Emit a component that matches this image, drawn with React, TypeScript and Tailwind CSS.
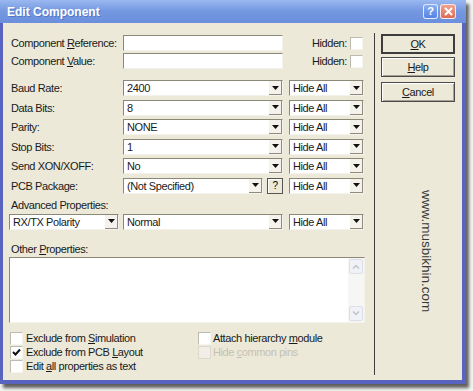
import type { ReactNode } from 'react';

const Arrow = () => (
  <svg width="7" height="4" viewBox="0 0 7 4">
    <path d="M0 0h7L3.5 4z" fill="#111" />
  </svg>
);

const DropBtn = () => (
  <div className="flex h-full w-[13px] shrink-0 items-center justify-center border-r border-b border-r-[#8f8c7e] border-b-[#8f8c7e] bg-[#f4f2ea]">
    <Arrow />
  </div>
);

const Combo = ({ w, value }: { w: string; value: string }) => (
  <div className={`flex h-[16px] shrink-0 ${w} border border-t-[#8b8878] border-l-[#8b8878] border-b-[#f3f2ec] border-r-[#f3f2ec] bg-white`}>
    <span className="flex-1 truncate pl-[3px] text-[11px] leading-[14px] text-[#1a1a1a]">{value}</span>
    <DropBtn />
  </div>
);

const TextBox = ({ w }: { w: string }) => (
  <div className={`h-[16px] shrink-0 ${w} border border-t-[#8b8878] border-l-[#8b8878] border-b-[#f3f2ec] border-r-[#f3f2ec] bg-white`} />
);

const Check = ({ checked = false, disabled = false }: { checked?: boolean; disabled?: boolean }) => (
  <div
    className={`flex h-[13px] w-[13px] shrink-0 items-center justify-center border ${
      disabled ? 'border-[#dcd9cc] bg-[#f0eee6]' : 'border-t-[#bdbab0] border-l-[#bdbab0] border-b-[#f6f5f0] border-r-[#f6f5f0] bg-white'
    }`}
  >
    {checked && (
      <svg width="9" height="8" viewBox="0 0 9 8">
        <path d="M1 4l2.5 2.5L8 1.5" stroke="#111" strokeWidth="2" fill="none" />
      </svg>
    )}
  </div>
);

const Label = ({ children }: { children: ReactNode }) => (
  <span className="w-[114px] shrink-0 whitespace-nowrap pl-[2px] text-[11px] leading-[14px] text-[#1a1a1a]">{children}</span>
);

const Row = ({ label, value }: { label: string; value: string }) => (
  <div className="flex h-[16px] items-center">
    <Label>{label}</Label>
    <Combo w="w-[160px]" value={value} />
    <div className="w-[6px] shrink-0" />
    <Combo w="w-[75px]" value="Hide All" />
  </div>
);

const DlgButton = ({ children, def = false }: { children: ReactNode; def?: boolean }) => (
  <div
    className={`flex h-[20px] w-[74px] items-center justify-center bg-[#ece9d8] text-[11px] text-[#1a1a1a] ${
      def ? 'border-2 border-[#3d3d3d]' : 'border border-[#4a4a4a] shadow-[inset_1px_1px_0_#fff,inset_-1px_-1px_0_#a6a394]'
    }`}
  >
    {children}
  </div>
);

export default function App() {
  return (
    <div className="h-[391px] w-[473px] bg-[#f3f3f1] font-['Liberation_Sans',Arial,sans-serif] tracking-[-0.4px]">
      <div className="flex h-[384px] w-[466px] flex-col shadow-[3px_4px_3px_rgba(0,0,0,0.6)]">
        {/* title bar */}
        <div className="flex h-[23px] shrink-0 items-center bg-gradient-to-b from-[#9ab8f0] via-[#7397e0] to-[#6b8fdc] pl-[7px] pr-[10px]">
          <span className="flex-1 text-[12px] font-bold tracking-normal text-white [text-shadow:1px_1px_0_#5476c8]">Edit Component</span>
          <div className="flex gap-[2px]">
            <div className="flex h-[15px] w-[15px] items-center justify-center rounded-[3px] border border-white/80 bg-gradient-to-b from-[#8aaef4] to-[#5582e4] text-[11px] font-bold leading-none text-white">?</div>
            <div className="flex h-[15px] w-[16px] items-center justify-center rounded-[3px] border border-white/80 bg-gradient-to-b from-[#eea390] to-[#dc6a55]">
              <svg width="9" height="9" viewBox="0 0 9 9">
                <path d="M1 1l7 7M8 1L1 8" stroke="#fff" strokeWidth="2" />
              </svg>
            </div>
          </div>
        </div>

        {/* body */}
        <div className="flex flex-1 border-x-[3px] border-b-[4px] border-r-[4px] border-[#5864bf] bg-[#ece9d9]">
          {/* left panel */}
          <div className="flex w-[371px] shrink-0 flex-col pl-[6px] pt-[12px]">
            <div className="flex h-[16px] items-center">
              <Label>
                Component <u>R</u>eference:
              </Label>
              <TextBox w="w-[160px]" />
              <span className="w-[67px] shrink-0 pr-[3px] text-right text-[11px] text-[#1a1a1a]">Hidden:</span>
              <Check />
            </div>
            <div className="mt-[2px] flex h-[16px] items-center">
              <Label>
                Component <u>V</u>alue:
              </Label>
              <TextBox w="w-[160px]" />
              <span className="w-[67px] shrink-0 pr-[3px] text-right text-[11px] text-[#1a1a1a]">Hidden:</span>
              <Check />
            </div>

            <div className="mt-[11px] flex flex-col gap-[3.6px]">
              <Row label="Baud Rate:" value="2400" />
              <Row label="Data Bits:" value="8" />
              <Row label="Parity:" value="NONE" />
              <Row label="Stop Bits:" value="1" />
              <Row label="Send XON/XOFF:" value="No" />
              <div className="flex h-[16px] items-center">
                <Label>PCB Package:</Label>
                <Combo w="w-[140px]" value="(Not Specified)" />
                <div className="ml-[4px] flex h-[16px] w-[16px] shrink-0 items-center justify-center border border-[#555] bg-[#ece9d8] text-[10px] shadow-[inset_1px_1px_0_#fff]">
                  ?
                </div>
                <div className="w-[6px] shrink-0" />
                <Combo w="w-[75px]" value="Hide All" />
              </div>
            </div>

            <div className="mt-[4px] h-[14px] pl-[2px] text-[11px] leading-[14px] text-[#1a1a1a]">Advanced Properties:</div>
            <div className="mt-[2px] flex h-[16px] items-center">
              <Combo w="w-[110px]" value="RX/TX Polarity" />
              <div className="w-[4px] shrink-0" />
              <Combo w="w-[160px]" value="Normal" />
              <div className="w-[6px] shrink-0" />
              <Combo w="w-[75px]" value="Hide All" />
            </div>

            <div className="mt-[12px] h-[14px] pl-[2px] text-[11px] leading-[14px] text-[#1a1a1a]">
              Other <u>P</u>roperties:
            </div>
            <div className="mt-[1px] flex h-[66px] w-[356px] border border-t-[#8b8878] border-l-[#8b8878] border-b-[#f3f2ec] border-r-[#f3f2ec] bg-white">
              <div className="flex-1" />
              <div className="flex w-[16px] flex-col justify-between bg-[#f6f6f4] p-[1px]">
                <div className="flex h-[15px] items-center justify-center rounded-[2px] border border-[#dcdfe8] bg-[#f0f2f7]">
                  <svg width="8" height="5" viewBox="0 0 8 5">
                    <path d="M1 4.5L4 1.5L7 4.5" stroke="#c0c4cc" strokeWidth="1.5" fill="none" />
                  </svg>
                </div>
                <div className="flex h-[15px] items-center justify-center rounded-[2px] border border-[#dcdfe8] bg-[#f0f2f7]">
                  <svg width="8" height="5" viewBox="0 0 8 5">
                    <path d="M1 0.5L4 3.5L7 0.5" stroke="#c0c4cc" strokeWidth="1.5" fill="none" />
                  </svg>
                </div>
              </div>
            </div>

            <div className="mt-[9px] flex flex-col gap-[1px] text-[11px] leading-[13px] text-[#1a1a1a]">
              <div className="flex h-[13px]">
                <div className="flex w-[189px] items-center gap-[3px] pl-[1px]">
                  <Check />
                  <span>
                    Exclude from <u>S</u>imulation
                  </span>
                </div>
                <div className="flex items-center gap-[2px]">
                  <Check />
                  <span>
                    Attach hierarchy <u>m</u>odule
                  </span>
                </div>
              </div>
              <div className="flex h-[13px]">
                <div className="flex w-[189px] items-center gap-[3px] pl-[1px]">
                  <Check checked />
                  <span>
                    Exclude from PCB <u>L</u>ayout
                  </span>
                </div>
                <div className="flex items-center gap-[2px] text-[#c4c1b4]">
                  <Check disabled />
                  <span>
                    Hide <u>c</u>ommon pins
                  </span>
                </div>
              </div>
              <div className="flex h-[13px]">
                <div className="flex w-[189px] items-center gap-[3px] pl-[1px]">
                  <Check />
                  <span>
                    Edit <u>a</u>ll properties as text
                  </span>
                </div>
              </div>
            </div>
          </div>

          {/* separator */}
          <div className="mt-[10px] mb-[5px] w-px shrink-0 bg-[#3f3f3f]" />

          {/* right panel */}
          <div className="flex flex-1 flex-col pl-[6px] pt-[11px]">
            <DlgButton def>
              <u>O</u>K
            </DlgButton>
            <div className="mt-[3px]">
              <DlgButton>
                <u>H</u>elp
              </DlgButton>
            </div>
            <div className="mt-[5px]">
              <DlgButton>
                <u>C</u>ancel
              </DlgButton>
            </div>
            <div className="ml-[38px] mt-[88px] self-start text-[13.5px] leading-[15px] tracking-normal text-[#3a3a3a] [writing-mode:vertical-rl]">
              www.musbikhin.com
            </div>
          </div>
        </div>
      </div>
    </div>
  );
}
